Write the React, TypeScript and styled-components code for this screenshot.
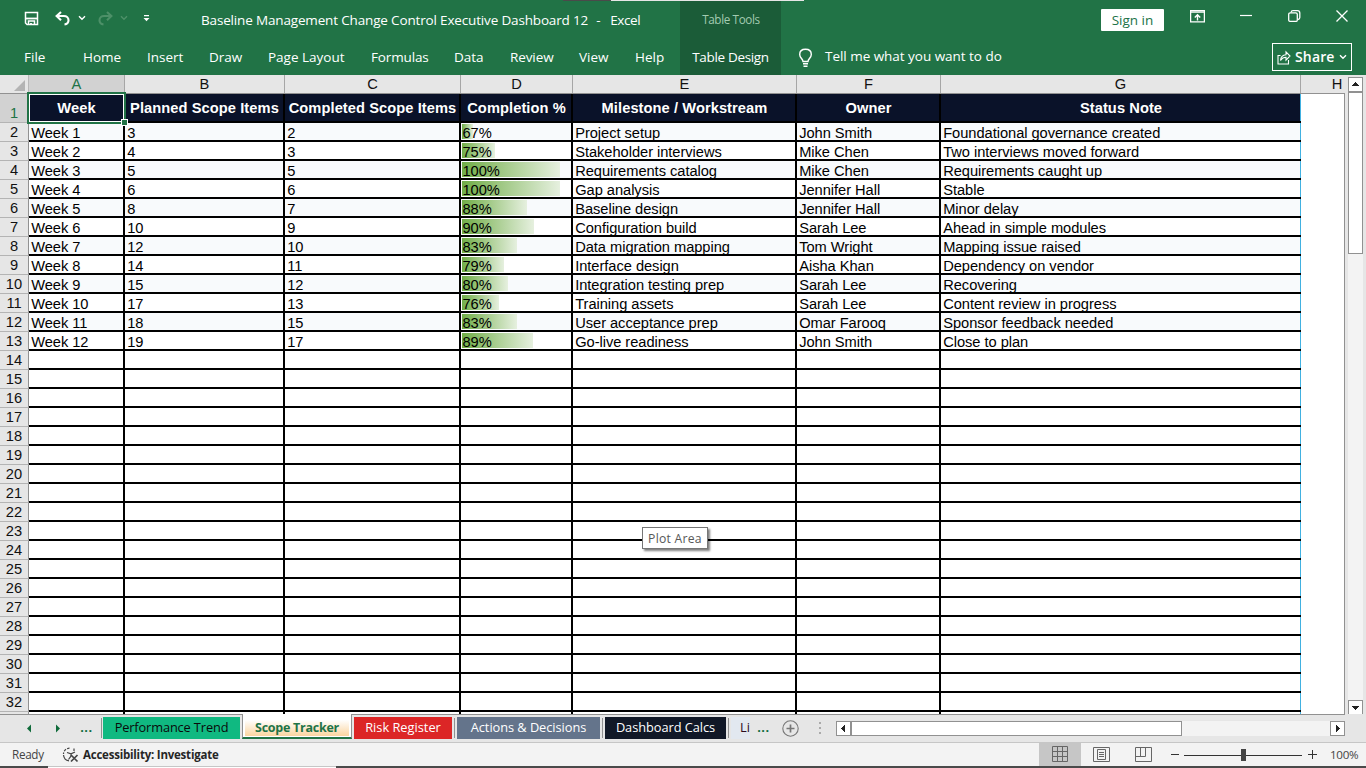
import React from 'react';
import styled, { createGlobalStyle, css } from 'styled-components';

const GREEN = '#217346';
const UI = `'Open Sans', 'Noto Sans', sans-serif`;
const GRID = `'Liberation Sans', Arial, sans-serif`;

const Global = createGlobalStyle`
  * { box-sizing: border-box; }
  body { margin: 0; overflow: hidden; background: #e6e6e6; }
  svg { display: block; flex: none; }
`;

const Window = styled.div`
  position: relative;
  display: flex;
  flex-direction: column;
  width: 1366px;
  height: 768px;
  background: #e6e6e6;
  font-family: ${UI};
`;

/* ---------- title bar and ribbon ---------- */

const Header = styled.header`
  display: grid;
  grid-template-columns: 680px 101px 1fr;
  height: 75px;
  flex: none;
  background: ${GREEN};
  color: #fff;
`;
const HeaderPart = styled.div<{ $context?: boolean }>`
  display: grid;
  grid-template-rows: 40px 35px;
  background: ${(p) => (p.$context ? '#1b5c38' : 'transparent')};
`;
const TitleRow = styled.div`
  display: flex;
  align-items: center;
`;
const QuickAccess = styled.div`
  display: flex;
  align-items: center;
  width: 201px;
  padding: 0 0 4px 24px;
`;
const Title = styled.div`
  display: flex;
  font-size: 13.5px;
  letter-spacing: -0.16px;
  white-space: pre;
`;
const TitleDash = styled.span`
  width: 22px;
  padding-left: 8px;
`;
const AppName = styled.span`
  letter-spacing: -0.4px;
`;
const RibbonRow = styled.nav`
  display: flex;
  align-items: center;
  padding: 0 0 2px 24px;
`;
const RibbonTab = styled.div<{ $w: number; $ls?: number }>`
  width: ${(p) => p.$w}px;
  flex: none;
  font-size: 13.5px;
  letter-spacing: ${(p) => p.$ls ?? 0}px;
  white-space: nowrap;
`;
const ContextTitle = styled.div`
  padding: 0 0 3px 1px;
  width: 100%;
  text-align: center;
  font-size: 11.7px;
  letter-spacing: -0.36px;
  color: #a3cbb1;
`;
const ContextTab = styled.div`
  width: 100%;
  padding-bottom: 2px;
  text-align: center;
  font-size: 13.5px;
  letter-spacing: -0.33px;
  align-self: center;
`;
const WindowControls = styled(TitleRow)`
  justify-content: flex-end;
  padding-right: 18px;
`;
const SignIn = styled.button`
  width: 63px;
  height: 22px;
  margin-right: 26px;
  padding: 0;
  border: 0;
  border-radius: 1px;
  background: #fff;
  color: ${GREEN};
  font: 13.5px/22px ${UI};
`;
const ControlIcon = styled.span<{ $gap: number }>`
  margin: 0 ${(p) => p.$gap}px 8px 0;
`;
const SearchRow = styled.div`
  display: flex;
  align-items: center;
  padding: 0 14px 0 16px;
`;
const TellMe = styled.div`
  flex: 1;
  padding-left: 11px;
  margin-top: -3px;
  font-size: 13.5px;
  letter-spacing: -0.03px;
`;
const ShareButton = styled.button`
  display: flex;
  align-items: center;
  width: 80px;
  height: 28px;
  margin-bottom: 1px;
  padding: 0 0 0 4px;
  border: 1px solid #fff;
  background: none;
  color: #fff;
  font: 600 14px/26px ${UI};
  letter-spacing: 0.15px;
`;
const ShareText = styled.span`
  width: 48px;
  flex: none;
  padding-left: 4px;
  text-align: left;
`;
const BackgroundEdge = styled.div`
  position: absolute;
  top: 0;
  left: 563px;
  width: 241px;
  height: 1px;
  background: linear-gradient(to right, #4a4a4a 48px, #e6e6e6 48px);
`;

/* ---------- worksheet ---------- */

const Workspace = styled.main`
  display: flex;
  height: 639px;
  flex: none;
`;
const Sheet = styled.div`
  position: relative;
  width: 1345px;
  height: 639px;
  overflow: hidden;
  font: 14.667px ${GRID};
  color: #000;
`;
const ColumnHeads = styled.div`
  display: flex;
  height: 19px;
  border-bottom: 1px solid #919191;
  background: #e6e6e6;
`;
const Corner = styled.div`
  display: flex;
  justify-content: flex-end;
  align-items: flex-end;
  width: 29px;
  flex: none;
  padding: 0 3px 2px 0;
  border-right: 1px solid #b8b8b8;
`;
const ColumnHead = styled.div<{ $w: number; $active?: boolean; $last?: boolean }>`
  width: ${(p) => p.$w}px;
  flex: none;
  height: 18px;
  line-height: 19px;
  text-align: center;
  border-right: ${(p) => (p.$last ? 0 : 1)}px solid #a6a6a6;
  background: ${(p) => (p.$active ? '#d2d2d2' : 'transparent')};
  color: ${(p) => (p.$active ? GREEN : '#111')};
`;
const Rows = styled.div`
  width: 1345px;
  height: 620px;
  overflow: hidden;
  background: #fff;
  border-right: 1px solid #919191;
`;
const Row = styled.div<{ $h: number }>`
  display: flex;
  height: ${(p) => p.$h}px;
`;
const RowHead = styled.div<{ $active?: boolean }>`
  display: flex;
  align-items: flex-end;
  justify-content: center;
  width: 29px;
  height: 100%;
  flex: none;
  overflow: hidden;
  border-right: 1px solid #919191;
  border-bottom: 1px solid #b4b4b4;
  background: ${(p) => (p.$active ? '#d2d2d2' : '#e6e6e6')};
  color: ${(p) => (p.$active ? GREEN : '#111')};
  line-height: 17px;
`;
const Cells = styled.div<{ $kind: 'head' | 'banded' | 'plain' }>`
  display: flex;
  width: 1272px;
  border-bottom: 2px solid #000;
  letter-spacing: -0.04px;
  background: ${(p) => ({ head: '#0a1229', banded: '#f8fafc', plain: '#fff' })[p.$kind]};
  ${(p) =>
    p.$kind === 'head' &&
    css`
      color: #fff;
      font-weight: bold;
      letter-spacing: 0.07px;
      text-align: center;
    `}
`;
const Cell = styled.div<{ $w: number; $last?: boolean; $head?: boolean }>`
  position: relative;
  width: ${(p) => p.$w}px;
  height: 100%;
  flex: none;
  overflow: hidden;
  padding-left: ${(p) => (p.$head ? 1 : 2.2)}px;
  line-height: ${(p) => (p.$head ? 29 : 20)}px;
  white-space: nowrap;
  border-right: ${(p) => (p.$last ? '1px solid #41b1e1' : '2px solid #000')};
`;
const DataBar = styled.div`
  position: absolute;
  top: 1px;
  left: 1px;
  height: 15px;
  background: linear-gradient(to right, #70ad47, #e6f0df);
`;
const CellText = styled.span<{ $percent?: boolean }>`
  position: relative;
  margin-left: ${(p) => (p.$percent ? -0.7 : 0)}px;
`;
const Selection = styled.div`
  position: absolute;
  left: 27px;
  top: 17px;
  width: 99px;
  height: 32px;
  border: 2px solid ${GREEN};
  box-shadow: inset 0 0 0 1px #fff;
`;
const FillHandle = styled.div`
  position: absolute;
  left: 122px;
  top: 45px;
  width: 5px;
  height: 5px;
  background: ${GREEN};
  box-shadow: 0 0 0 1px #fff;
`;
const Tooltip = styled.div`
  position: absolute;
  left: 642px;
  top: 452px;
  width: 66px;
  height: 22px;
  border: 1px solid #767676;
  background: #fff;
  box-shadow: 2px 2px 2px rgba(0, 0, 0, 0.5);
  color: #575757;
  text-align: center;
  font: 12.2px/21.5px ${UI};
  letter-spacing: 0.25px;
`;

/* ---------- scroll bars ---------- */

const VerticalScroll = styled.div`
  display: flex;
  flex-direction: column;
  width: 15px;
  height: 638px;
  margin: 2px 0 0 3px;
  background: #f3f3f3;
`;
const ScrollButton = styled.div`
  display: flex;
  align-items: center;
  justify-content: center;
  width: 15px;
  height: 15px;
  flex: none;
  border: 1px solid #919191;
  background: #fff;
`;
const VerticalThumb = styled.div`
  height: 163px;
  margin: -1px 0 auto;
  border: 1px solid #919191;
  border-top-width: 2px;
  background: #fff;
`;
const HorizontalScroll = styled.div`
  display: flex;
  width: 509px;
  height: 15px;
  flex: none;
  margin-top: 7px;
  background: #f3f3f3;
`;
const HorizontalThumb = styled.div`
  width: 332px;
  margin: 0 auto 0 -1px;
  border: 1px solid #919191;
  border-left-width: 2px;
  background: #fff;
`;

/* ---------- sheet tabs ---------- */

const TabBar = styled.div`
  display: flex;
  height: 29px;
  flex: none;
  width: 1366px;
  border-bottom: 1px solid #c6c6c6;
  background: linear-gradient(#919191, #919191) 0 0 / 1345px 1px no-repeat #e6e6e6;
`;
const TabNav = styled.div`
  display: flex;
  align-items: center;
  width: 101px;
  flex: none;
  padding-left: 26px;
`;
const More = styled.span<{ $w: number; $pad: number; $lift?: boolean }>`
  width: ${(p) => p.$w}px;
  flex: none;
  margin-bottom: ${(p) => (p.$lift ? 4 : 0)}px;
  padding-left: ${(p) => p.$pad}px;
  color: #0f6b3a;
  font: 600 15px/24px ${UI};
  white-space: nowrap;
`;
const TabDivider = styled.span`
  width: 1px;
  height: 20px;
  flex: none;
  margin-top: 4px;
  background: #919191;
`;
const SheetTab = styled.div<{ $w: number; $bg: string; $fg?: string; $ml?: number; $ls?: number }>`
  width: ${(p) => p.$w}px;
  height: 22px;
  flex: none;
  margin: 3px 2px 0 ${(p) => p.$ml ?? 2}px;
  background: ${(p) => p.$bg};
  color: ${(p) => p.$fg ?? '#fff'};
  text-align: center;
  font-size: 12.8px;
  line-height: 21px;
  letter-spacing: ${(p) => p.$ls ?? 0}px;
  white-space: nowrap;
  overflow: hidden;
`;
const ActiveTab = styled.div`
  width: 110px;
  height: 25px;
  flex: none;
  padding: 3px 2px 1px;
  border: solid #919191;
  border-width: 0 1px;
  border-bottom: 2px solid ${GREEN};
  background: #fff;
`;
const ActiveTabLabel = styled.div`
  height: 19px;
  background: linear-gradient(#fff 15%, #fbd5a0);
  color: ${GREEN};
  text-align: center;
  font: 700 12.5px/21px ${UI};
  letter-spacing: -0.26px;
`;
const PartialTab = styled.div`
  width: 19px;
  height: 22px;
  flex: none;
  margin: 3px 0 0 2px;
  padding-left: 9px;
  overflow: hidden;
  background: #e2e8f0;
  color: #2b0a1c;
  font-size: 12.8px;
  line-height: 21px;
`;
const AddSheet = styled.div`
  width: 49px;
  flex: none;
  padding: 6px 0 0 12px;
`;
const SplitGrip = styled.div`
  width: 17px;
  flex: none;
  padding-top: 8px;
`;

/* ---------- status bar ---------- */

const StatusBar = styled.footer`
  display: flex;
  align-items: center;
  height: 23px;
  flex: none;
  padding-left: 12px;
  background: #f3f3f3;
  color: #444;
  font-size: 11.7px;
`;
const Ready = styled.span`
  width: 50px;
  margin-bottom: 1px;
  letter-spacing: -0.3px;
`;
const Accessibility = styled.span`
  flex: 1;
  padding-left: 4px;
  color: #262626;
  font-weight: 700;
  font-size: 11.5px;
  letter-spacing: -0.22px;
`;
const ViewButton = styled.span<{ $on?: boolean }>`
  display: flex;
  align-items: center;
  justify-content: center;
  width: 42px;
  height: 24px;
  margin-top: -1px;
  padding-right: ${(p) => (p.$on ? 0 : 2)}px;
  background: ${(p) => (p.$on ? '#c6c6c6' : 'transparent')};
`;
const Zoom = styled.div`
  display: flex;
  align-items: center;
  width: 201px;
  padding-left: 5px;
`;
const ZoomText = styled.span`
  margin: 0 0 1px 12px;
  font-size: 11.6px;
  letter-spacing: -0.3px;
`;
const DesktopEdge = styled.div`
  height: 2px;
  flex: none;
  background:
    linear-gradient(to right, #4a4a4a 48px, #c6c6c6 48px 336px, #4a4a4a 336px) 0 0 / 100% 1px no-repeat,
    linear-gradient(to right, #4a4a4a 48px, #fff 48px 336px, #4a4a4a 336px);
`;

/* ---------- icons ---------- */

const SaveIcon = () => (
  <svg width="15" height="15" viewBox="0 0 15 15" fill="none" stroke="#fff">
    <path d="M1.500 1.500h12v12H3l-1.500-1.500z" strokeWidth="1.500" />
    <path d="M2 7.500h11" strokeWidth="1.800" />
    <path d="M4.500 14v-4h6v4" strokeWidth="1.500" />
    <path d="M7 12v2" strokeWidth="1.800" />
  </svg>
);
const UndoIcon = ({ color, flip }: { color: string; flip?: boolean }) => (
  <svg width="15" height="15" viewBox="0 0 15 15" fill="none" stroke={color} strokeWidth="2.1">
    <g transform={flip ? 'translate(15 0) scale(-1 1)' : undefined}>
      <path d="M6 .9 1.600 5 6 9.200" />
      <path d="M2 5h6.800c3 0 4.700 1.700 4.700 4.200 0 2.300-1.500 3.900-4 4.300" />
    </g>
  </svg>
);
const Chevron = ({ color = '#fff' }: { color?: string }) => (
  <svg width="8" height="6" viewBox="0 0 8 6" fill="none" stroke={color} strokeWidth="1.4">
    <path d="M1 1.200 4 4.200l3-3" />
  </svg>
);
const CustomizeIcon = () => (
  <svg width="7" height="7" viewBox="0 0 7 7" fill="#fff">
    <path d="M1 0h5v1.200H1zM.5 3h6l-3 3.300z" />
  </svg>
);
const RibbonIcon = () => (
  <svg width="15" height="13" viewBox="0 0 15 13" fill="none" stroke="#fff">
    <path d="M.6.6h13.800v11.300H.6zM.6 2.200h13.800" strokeWidth="1.300" />
    <path d="M7.500 10.500V5M4.800 7.500l2.700-2.700 2.700 2.700" strokeWidth="1.400" />
  </svg>
);
const MinimizeIcon = () => (
  <svg width="12" height="11" viewBox="0 0 12 11" stroke="#fff">
    <path d="M0 4.500h12" strokeWidth="1.200" />
  </svg>
);
const RestoreIcon = () => (
  <svg width="13" height="12" viewBox="0 0 13 12" fill="none" stroke="#fff" strokeWidth="1.300">
    <rect x=".7" y="2.800" width="8.600" height="8.600" rx="1.500" />
    <path d="M3 2.500C3.200 1.300 4 .7 5 .7h4.500c1.400 0 2.300.9 2.300 2.300v4.500c0 1-.6 1.800-1.800 2" />
  </svg>
);
const CloseIcon = () => (
  <svg width="12" height="12" viewBox="0 0 12 12" stroke="#fff" strokeWidth="1.300">
    <path d="m.5.5 11 11M11.500.5l-11 11" />
  </svg>
);
const BulbIcon = () => (
  <svg width="17" height="20" viewBox="0 0 17 20" fill="none" stroke="#fff" strokeWidth="1.400">
    <path d="M6 13.500c0-2.500-3.300-3.700-3.300-7C2.700 3.300 5 1.300 8.500 1.300s5.800 2 5.800 5.200c0 3.300-3.300 4.500-3.300 7z" />
    <path d="M6 15.800h5M6.500 18.200h4" />
  </svg>
);
const ShareIcon = () => (
  <svg width="14" height="15" viewBox="0 0 14 15" fill="none" stroke="#fff" strokeWidth="1.100">
    <path d="M3.500 5.500H1v8.500h10.500v-4" />
    <path d="M3.500 10.500c.3-3.800 2.200-5.700 5.500-5.800V1.800l4 4.200-4 4.200V7.300c-2.400 0-4 .9-5.500 3.200z" />
  </svg>
);
const Arrow = ({ d, color = '#222' }: { d: string; color?: string }) => (
  <svg width="9" height="9" viewBox="0 0 9 9" fill={color}>
    <path d={d} />
  </svg>
);
const AccessibilityIcon = () => (
  <svg width="17" height="16" viewBox="0 0 17 16" fill="none" stroke="#444" strokeWidth="1.200">
    <path d="M7.500 1.200A6 6 0 0 0 1.500 7" strokeDasharray="2.500 1.200" />
    <path d="M1.500 8c.3 3 2.500 5.400 5.500 5.800" />
    <path d="M5 5.500l4 1.300 4-1.800M9 7v2l-2.500 3.500M12 1.500v2.500" />
    <path d="m9 8 6.500 6.500M15.500 8 9 14.500" strokeWidth="1.700" />
  </svg>
);
const NormalViewIcon = () => (
  <svg width="17" height="17" viewBox="0 0 17 17" fill="none" stroke="#666">
    <path d="M.5.5h15v15H.5zM5.500.5v15M10.500.5v15M.5 5.500h15M.5 10.500h15" />
  </svg>
);
const PageLayoutIcon = () => (
  <svg width="17" height="15" viewBox="0 0 17 15" fill="none" stroke="#666">
    <path d="M.5.5h16v14H.5zM4.500 2.500h8v10h-8zM6 5.500h5M6 7.500h5M6 9.500h5" />
  </svg>
);
const PageBreakIcon = () => (
  <svg width="17" height="15" viewBox="0 0 17 15" fill="none" stroke="#666">
    <path d="M.5.5h16v14H.5zM5.500.5v9M10.500.5v9M.5 9.500h10" />
  </svg>
);
const ZoomSliderIcon = () => (
  <svg width="148" height="13" viewBox="0 0 148 13" fill="none" stroke="#333">
    <path d="M1 6.500h8M14 7.500h118M138 6.500h9M142.500 2v9" />
    <rect x="71" y="1" width="5" height="12" fill="#444" stroke="none" />
  </svg>
);
const AddIcon = () => (
  <svg width="17" height="17" viewBox="0 0 17 17" fill="none" stroke="#777">
    <circle cx="8.500" cy="8.500" r="7.700" strokeWidth="1.100" />
    <path d="M8.500 4.500v8M4.500 8.500h8" strokeWidth="1.700" />
  </svg>
);
const DotsIcon = () => (
  <svg width="2" height="12" viewBox="0 0 2 12" fill="#aaa">
    <path d="M0 0h2v2H0zM0 5h2v2H0zM0 10h2v2H0z" />
  </svg>
);

/* ---------- data ---------- */

const ribbonTabs: [string, number, number?][] = [
  ['File', 59],
  ['Home', 64],
  ['Insert', 62],
  ['Draw', 59],
  ['Page Layout', 103],
  ['Formulas', 83, -0.15],
  ['Data', 56],
  ['Review', 69, -0.1],
  ['View', 56],
  ['Help', 40],
];

const columns = [
  { letter: 'A', width: 96, title: 'Week' },
  { letter: 'B', width: 160, title: 'Planned Scope Items' },
  { letter: 'C', width: 176, title: 'Completed Scope Items' },
  { letter: 'D', width: 112, title: 'Completion %' },
  { letter: 'E', width: 224, title: 'Milestone / Workstream' },
  { letter: 'F', width: 144, title: 'Owner' },
  { letter: 'G', width: 360, title: 'Status Note' },
];

const records = [
  ['Week 1', '3', '2', '67%', 'Project setup', 'John Smith', 'Foundational governance created'],
  ['Week 2', '4', '3', '75%', 'Stakeholder interviews', 'Mike Chen', 'Two interviews moved forward'],
  ['Week 3', '5', '5', '100%', 'Requirements catalog', 'Mike Chen', 'Requirements caught up'],
  ['Week 4', '6', '6', '100%', 'Gap analysis', 'Jennifer Hall', 'Stable'],
  ['Week 5', '8', '7', '88%', 'Baseline design', 'Jennifer Hall', 'Minor delay'],
  ['Week 6', '10', '9', '90%', 'Configuration build', 'Sarah Lee', 'Ahead in simple modules'],
  ['Week 7', '12', '10', '83%', 'Data migration mapping', 'Tom Wright', 'Mapping issue raised'],
  ['Week 8', '14', '11', '79%', 'Interface design', 'Aisha Khan', 'Dependency on vendor'],
  ['Week 9', '15', '12', '80%', 'Integration testing prep', 'Sarah Lee', 'Recovering'],
  ['Week 10', '17', '13', '76%', 'Training assets', 'Sarah Lee', 'Content review in progress'],
  ['Week 11', '18', '15', '83%', 'User acceptance prep', 'Omar Farooq', 'Sponsor feedback needed'],
  ['Week 12', '19', '17', '89%', 'Go-live readiness', 'John Smith', 'Close to plan'],
];

const DATA_BAR_MAX = 98;
const DATA_BAR_MIN = 11;

/* Bars run from the lowest ratio in the column (shortest) to 100% (longest). */
const barWidth = (planned: string, completed: string) => {
  const low = 2 / 3;
  const share = (Number(completed) / Number(planned) - low) / (1 - low);
  return Math.round(DATA_BAR_MIN + share * (DATA_BAR_MAX - DATA_BAR_MIN));
};

const rowNumbers = Array.from({ length: 32 }, (_, i) => i + 2);

const BodyRow = ({ n }: { n: number }) => {
  const record = records[n - 2];
  return (
    <Row $h={19}>
      <RowHead>{n <= 32 ? n : ''}</RowHead>
      <Cells $kind={record && n % 2 === 0 ? 'banded' : 'plain'}>
        {columns.map((c, i) => (
          <Cell key={c.letter} $w={c.width} $last={i === 6}>
            {record && i === 3 && <DataBar style={{ width: barWidth(record[1], record[2]) }} />}
            {record && <CellText $percent={i === 3}>{record[i]}</CellText>}
          </Cell>
        ))}
      </Cells>
    </Row>
  );
};

export default function App() {
  return (
    <Window>
      <Global />
      <Header>
        <HeaderPart>
          <TitleRow>
            <QuickAccess>
              <SaveIcon />
              <ControlIcon $gap={8} />
              <ControlIcon $gap={8} />
              <UndoIcon color="#fff" />
              <ControlIcon $gap={8} />
              <Chevron />
              <ControlIcon $gap={12} />
              <UndoIcon color="#4d9068" flip />
              <ControlIcon $gap={7} />
              <Chevron color="#4d9068" />
              <ControlIcon $gap={15} />
              <CustomizeIcon />
            </QuickAccess>
            <Title>
              <span>Baseline Management Change Control Executive Dashboard 12</span>
              <TitleDash>-</TitleDash>
              <AppName>Excel</AppName>
            </Title>
          </TitleRow>
          <RibbonRow>
            {ribbonTabs.map(([label, w, ls]) => (
              <RibbonTab key={label} $w={w} $ls={ls}>
                {label}
              </RibbonTab>
            ))}
          </RibbonRow>
        </HeaderPart>
        <HeaderPart $context>
          <TitleRow>
            <ContextTitle>Table Tools</ContextTitle>
          </TitleRow>
          <ContextTab>Table Design</ContextTab>
        </HeaderPart>
        <HeaderPart>
          <WindowControls>
            <SignIn>Sign in</SignIn>
            <ControlIcon $gap={35}>
              <RibbonIcon />
            </ControlIcon>
            <ControlIcon $gap={36}>
              <MinimizeIcon />
            </ControlIcon>
            <ControlIcon $gap={35}>
              <RestoreIcon />
            </ControlIcon>
            <ControlIcon $gap={0}>
              <CloseIcon />
            </ControlIcon>
          </WindowControls>
          <SearchRow>
            <BulbIcon />
            <TellMe>Tell me what you want to do</TellMe>
            <ShareButton>
              <ShareIcon />
              <ShareText>Share</ShareText>
              <Chevron />
            </ShareButton>
          </SearchRow>
        </HeaderPart>
      </Header>
      <BackgroundEdge />

      <Workspace>
        <Sheet>
          <ColumnHeads>
            <Corner>
              <svg width="11" height="11" viewBox="0 0 11 11" fill="#b4b4b4">
                <path d="M11 0v11H0z" />
              </svg>
            </Corner>
            {columns.map((c, i) => (
              <ColumnHead key={c.letter} $w={c.width} $active={i === 0}>
                {c.letter}
              </ColumnHead>
            ))}
            <ColumnHead $w={72} $last>
              H
            </ColumnHead>
          </ColumnHeads>
          <Rows>
            <Row $h={29}>
              <RowHead $active>1</RowHead>
              <Cells $kind="head">
                {columns.map((c, i) => (
                  <Cell key={c.letter} $w={c.width} $last={i === 6} $head>
                    {c.title}
                  </Cell>
                ))}
              </Cells>
            </Row>
            {rowNumbers.map((n) => (
              <BodyRow key={n} n={n} />
            ))}
          </Rows>
          <Selection />
          <FillHandle />
          <Tooltip>Plot Area</Tooltip>
        </Sheet>
        <VerticalScroll>
          <ScrollButton>
            <Arrow d="M4 2h1v1h1v1h1v1h1v1H1V5h1V4h1V3h1z" />
          </ScrollButton>
          <VerticalThumb />
          <ScrollButton>
            <Arrow d="M1 3h7v1H7v1H6v1H5v1H4V6H3V5H2V4H1z" />
          </ScrollButton>
        </VerticalScroll>
      </Workspace>

      <TabBar>
        <TabNav>
          <Arrow color="#0f6b3a" d="M5 .5v8L1 4.500z" />
          <ControlIcon $gap={20} />
          <Arrow color="#0f6b3a" d="M1 .5v8l4-4z" />
          <More $w={35} $pad={16} $lift>
            ...
          </More>
        </TabNav>
        <TabDivider />
        <SheetTab $w={137} $bg="#10b981" $fg="#0a0a0a" $ml={1} $ls={-0.13}>
          Performance Trend
        </SheetTab>
        <ActiveTab>
          <ActiveTabLabel>Scope Tracker</ActiveTabLabel>
        </ActiveTab>
        <SheetTab $w={98} $bg="#dc2626">
          Risk Register
        </SheetTab>
        <TabDivider />
        <SheetTab $w={143} $bg="#64748b" $ls={-0.05}>
          Actions &amp; Decisions
        </SheetTab>
        <TabDivider />
        <SheetTab $w={121} $bg="#111827" $ls={-0.05}>
          Dashboard Calcs
        </SheetTab>
        <TabDivider />
        <PartialTab>Li</PartialTab>
        <More $w={20} $pad={7}>
          ...
        </More>
        <AddSheet>
          <AddIcon />
        </AddSheet>
        <SplitGrip>
          <DotsIcon />
        </SplitGrip>
        <HorizontalScroll>
          <ScrollButton>
            <Arrow d="M6 1v7H5V7H4V6H3V5H2V4h1V3h1V2h1V1z" />
          </ScrollButton>
          <HorizontalThumb />
          <ScrollButton>
            <Arrow d="M3 1v7h1V7h1V6h1V5h1V4H6V3H5V2H4V1z" />
          </ScrollButton>
        </HorizontalScroll>
      </TabBar>

      <StatusBar>
        <Ready>Ready</Ready>
        <AccessibilityIcon />
        <Accessibility>Accessibility: Investigate</Accessibility>
        <ViewButton $on>
          <NormalViewIcon />
        </ViewButton>
        <ViewButton>
          <PageLayoutIcon />
        </ViewButton>
        <ViewButton>
          <PageBreakIcon />
        </ViewButton>
        <Zoom>
          <ZoomSliderIcon />
          <ZoomText>100%</ZoomText>
        </Zoom>
      </StatusBar>
      <DesktopEdge />
    </Window>
  );
}
